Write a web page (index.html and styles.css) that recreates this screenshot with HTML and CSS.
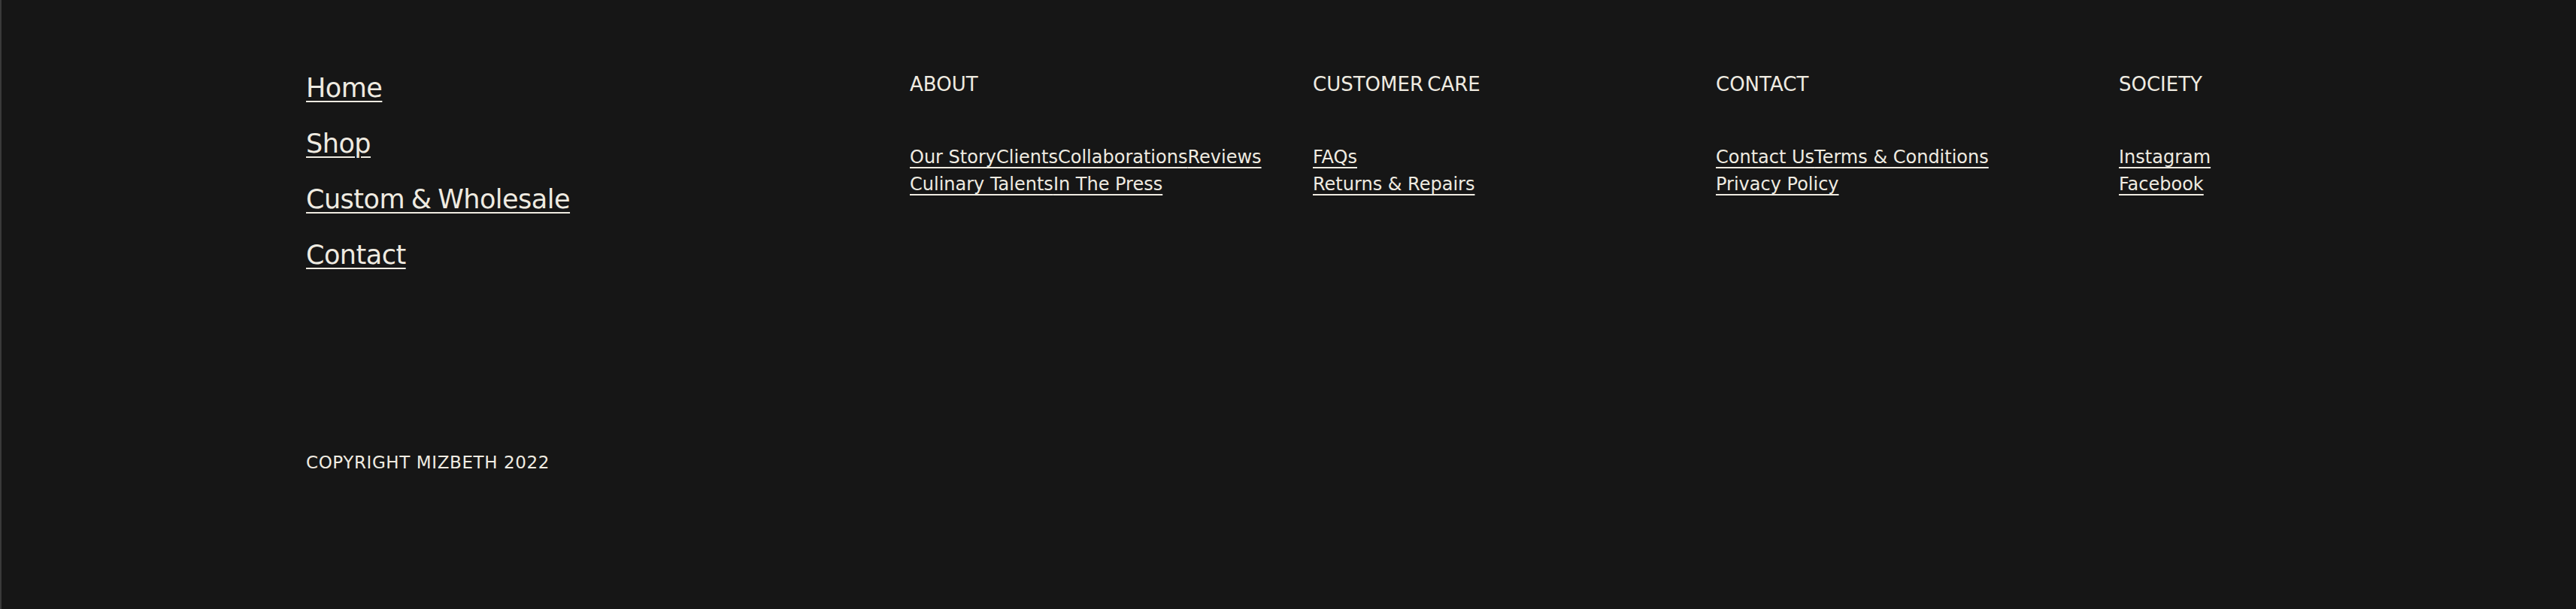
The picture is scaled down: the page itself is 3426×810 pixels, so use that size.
FILE: index.html
```html
<!DOCTYPE html>
<html lang="en">
<head>
<meta charset="utf-8">
<title>Mizbeth Footer</title>
<link rel="stylesheet" href="styles.css">
</head>
<body>
<footer class="footer">
  <div class="top">
    <nav class="main-nav">
      <a href="#">Home</a>
      <a href="#">Shop</a>
      <a href="#">Custom &amp; Wholesale</a>
      <a href="#">Contact</a>
    </nav>
    <div class="col">
      <h3 class="col-title">ABOUT</h3>
      <div class="links">
        <div class="row"><a href="#">Our Story</a><a href="#">Clients</a><a href="#">Collaborations</a><a href="#">Reviews</a></div>
        <div class="row"><a href="#">Culinary Talents</a><a href="#">In The Press</a></div>
      </div>
    </div>
    <div class="col">
      <h3 class="col-title">CUSTOMER CARE</h3>
      <div class="links">
        <div class="row"><a href="#">FAQs</a></div>
        <div class="row"><a href="#">Returns &amp; Repairs</a></div>
      </div>
    </div>
    <div class="col">
      <h3 class="col-title">CONTACT</h3>
      <div class="links">
        <div class="row"><a href="#">Contact Us</a><a href="#">Terms &amp; Conditions</a></div>
        <div class="row"><a href="#">Privacy Policy</a></div>
      </div>
    </div>
    <div class="col">
      <h3 class="col-title">SOCIETY</h3>
      <div class="links">
        <div class="row"><a href="#">Instagram</a></div>
        <div class="row"><a href="#">Facebook</a></div>
      </div>
    </div>
  </div>
  <p class="copyright">COPYRIGHT MIZBETH 2022</p>
</footer>
</body>
</html>
```
FILE: styles.css
```css
* { box-sizing: border-box; }
html, body { margin: 0; padding: 0; }
html { background: #161616; }
body {
  background: #161616;
  min-height: 810px;
  border-left: 2px solid #3a3a3a;
  font-family: "DejaVu Sans", "Liberation Sans", sans-serif;
  color: #efebe1;
}
.footer {
  padding: 97px 0 0 405px;
}
.top {
  display: flex;
  align-items: flex-start;
}
.main-nav {
  width: 803px;
  display: flex;
  flex-direction: column;
  align-items: flex-start;
  gap: 34px;
}
.main-nav a {
  font-size: 35px;
  line-height: 40px;
  letter-spacing: -0.5px;
  word-spacing: -2px;
  color: #efebe1;
  text-decoration: underline;
  text-decoration-thickness: 2px;
  text-underline-offset: 5px;
}
.col {
  width: 536px;
}
.col-title {
  margin: 0 0 64px;
  font-size: 26px;
  line-height: 30px;
  word-spacing: -3px;
  font-weight: normal;
}
.row {
  display: flex;
  height: 36px;
  align-items: center;
}
.row a {
  font-size: 24px;
  line-height: 36px;
  color: #efebe1;
  text-decoration: underline;
  text-decoration-thickness: 2px;
  text-underline-offset: 5px;
}
.copyright {
  margin: 241px 0 0;
  font-size: 23px;
  line-height: 30px;
  letter-spacing: 0.6px;
}
```
